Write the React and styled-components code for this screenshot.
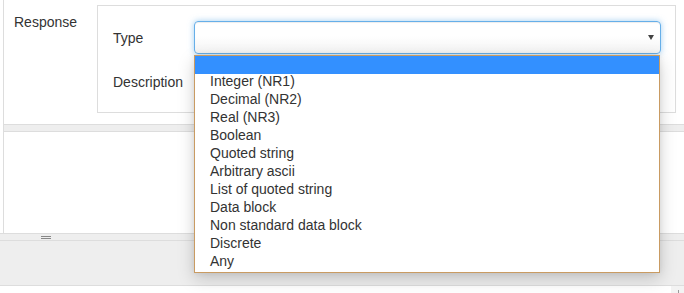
import React from "react";
import styled, { createGlobalStyle } from "styled-components";

const Global = createGlobalStyle`
  html, body { margin: 0; padding: 0; background: #fff; }
  body { font-family: "Liberation Sans", Arial, sans-serif; font-size: 14px; color: #333; }
  * { box-sizing: border-box; }
`;

const Page = styled.div`
  width: 684px;
  height: 293px;
  display: flex;
  flex-direction: column;
  overflow: hidden;
`;

const Framed = styled.div`
  margin-left: 3px;
  border-left: 1px solid #ddd;
  display: flex;
  flex-direction: column;
`;

const TopPanel = styled.div`
  height: 124px;
  padding: 5px 8px 0 10px;
  display: grid;
  grid-template-columns: 83px 1fr;
  align-items: start;
`;

const SectionLabel = styled.div`
  line-height: 20px;
  padding-top: 7px;
`;

const FieldBox = styled.div`
  height: 108px;
  border: 1px solid #ddd;
  padding: 15px 14px 14px 15px;
  display: grid;
  grid-template-columns: 81px 1fr;
  grid-auto-rows: 33px;
  row-gap: 11px;
  align-items: center;
`;

const FieldLabel = styled.div`
  line-height: 20px;
  padding-top: ${(p) => (p.$shift ? "1px" : "0")};
`;

const SelectWrap = styled.div`
  position: relative;
  height: 33px;
`;

const SelectBox = styled.div`
  height: 33px;
  border: 1px solid #66afe9;
  border-radius: 4px;
  background: linear-gradient(#fff 45%, #f3f3f3);
  box-shadow: inset 0 1px 1px rgba(0, 0, 0, 0.075), 0 0 6px rgba(102, 175, 233, 0.6);
  display: flex;
  align-items: center;
  justify-content: flex-end;
  padding-right: 6px;
`;

const Caret = styled.span`
  width: 0;
  height: 0;
  border-left: 3.5px solid transparent;
  border-right: 3.5px solid transparent;
  border-top: 5px solid #444;
`;

const Dropdown = styled.ul`
  position: absolute;
  left: 0;
  top: 34px;
  width: 466px;
  margin: 0;
  padding: 0;
  list-style: none;
  background: #fff;
  border: 1px solid #c99b62;
  box-shadow: 0 6px 16px rgba(0, 0, 0, 0.18), 0 0 6px rgba(0, 0, 0, 0.08);
  z-index: 10;
`;

const Option = styled.li`
  height: ${(p) => (p.$active ? "18px" : "18px")};
  line-height: 15px;
  padding-left: 15px;
  color: #333;
  white-space: nowrap;
  background: ${(p) => (p.$active ? "#3390ff" : "transparent")};
`;

const Band = styled.div`
  height: 8px;
  border-top: 1px solid #ddd;
  border-bottom: 1px solid #ddd;
  background: #eee;
  display: flex;
  align-items: center;
  padding-left: ${(p) => (p.$handle ? "41px" : "0")};
`;

const Handle = styled.span`
  width: 10px;
  height: 3px;
  border-top: 1px solid #888;
  border-bottom: 1px solid #888;
`;

const MiddlePanel = styled.div`
  height: 101px;
  background: #fff;
`;

const BottomPanel = styled.div`
  height: 45px;
  background: #eee;
  border-bottom: 1px solid #ddd;
`;

const Footer = styled.div`
  flex: 1;
  display: flex;
  justify-content: flex-end;
`;

const Corner = styled.div`
  width: 13px;
  background: #f3f3f3;
  position: relative;
  &::after {
    content: "";
    position: absolute;
    left: 7px;
    top: 4px;
    width: 1px;
    height: 4px;
    background: #999;
  }
`;

const options = [
  "",
  "Integer (NR1)",
  "Decimal (NR2)",
  "Real (NR3)",
  "Boolean",
  "Quoted string",
  "Arbitrary ascii",
  "List of quoted string",
  "Data block",
  "Non standard data block",
  "Discrete",
  "Any",
];

export default function App() {
  return (
    <>
      <Global />
      <Page>
        <Framed>
          <TopPanel>
            <SectionLabel>Response</SectionLabel>
            <FieldBox>
              <FieldLabel>Type</FieldLabel>
              <SelectWrap>
                <SelectBox>
                  <Caret />
                </SelectBox>
                <Dropdown>
                  {options.map((o, i) => (
                    <Option key={i} $active={i === 0}>
                      {o}
                    </Option>
                  ))}
                </Dropdown>
              </SelectWrap>
              <FieldLabel $shift>Description</FieldLabel>
              <div />
            </FieldBox>
          </TopPanel>
          <Band />
          <MiddlePanel />
        </Framed>
        <Band $handle>
          <Handle />
        </Band>
        <BottomPanel />
        <Footer>
          <Corner />
        </Footer>
      </Page>
    </>
  );
}
